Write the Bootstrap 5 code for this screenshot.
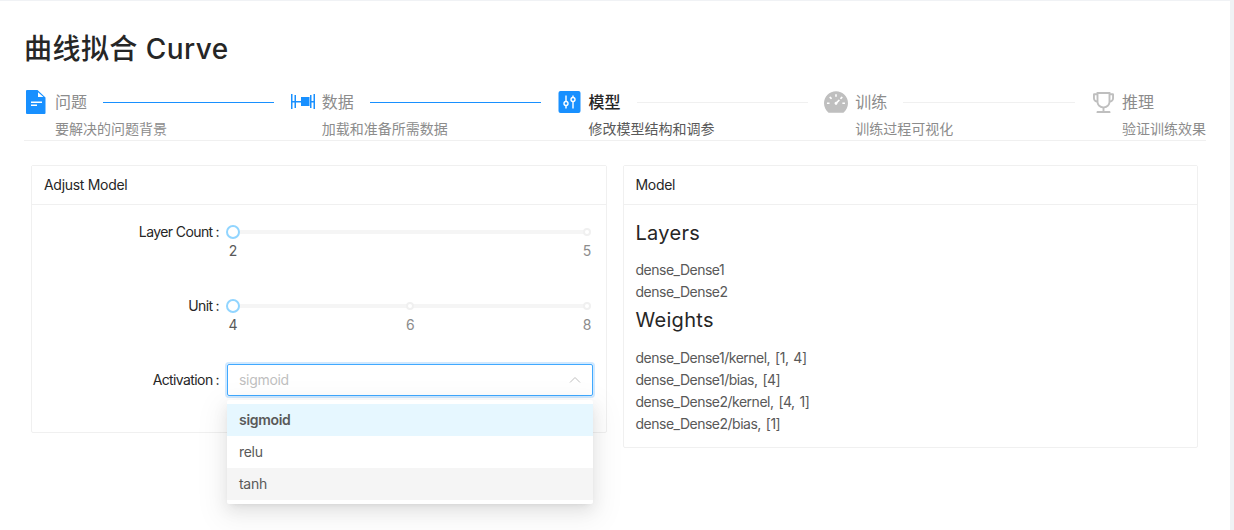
<!doctype html>
<html lang="zh-CN">
<head>
  <meta charset="utf-8">
  <meta name="viewport" content="width=device-width, initial-scale=1">
  <title>曲线拟合 Curve</title>
  <link href="https://cdn.jsdelivr.net/npm/bootstrap@5.3.3/dist/css/bootstrap.min.css" rel="stylesheet">
  <style>
    html, body {
      height: 100%;
    }

    body {
      background: #f0f2f5;
      font-family: Inter, "Noto Sans CJK SC", sans-serif;
      font-size: 14px;
      line-height: 22px;
      color: #595959;
      overflow: hidden;
    }

    .page-wrap {
      margin: 1px 4px 0 0;
      height: calc(100% - 1px);
      background: #fff;
      padding: 0 24px;
    }

    .page-title {
      font-size: 28px;
      line-height: 40px;
      font-weight: 500;
      letter-spacing: .45px;
      color: #262626;
      margin: 0;
      padding: 28px 0 21px;
    }

    /* steps */
    .step-bar {
      display: flex;
      border-bottom: 1px solid #f0f0f0;
      height: 51px;
    }

    .step-item {
      flex: 1 1 0;
      display: flex;
      padding-right: 16.5px;
      min-width: 0;
    }

    .step-item.last-step {
      flex: none;
      padding-right: 0;
    }

    .step-icon {
      flex: none;
      width: 31px;
      height: 24px;
    }

    .step-icon svg {
      display: block;
    }

    .step-icon .trophy-icon {
      margin: 2px 0 0 2px;
    }

    .step-body {
      flex: 1;
      min-width: 0;
    }

    .step-head {
      display: flex;
      align-items: center;
      font-size: 16px;
      line-height: 24px;
      color: #8c8c8c;
    }

    .step-line {
      flex: 1;
      height: 1px;
      background: #f0f0f0;
      margin-left: 16px;
    }

    .step-desc {
      color: #8c8c8c;
      white-space: nowrap;
      margin-top: 4px;
    }

    .is-done .step-line {
      background: #1890ff;
    }

    .is-active .step-head {
      color: #262626;
      font-weight: 500;
    }

    .is-active .step-desc {
      color: #595959;
    }

    /* cards */
    .panel-row {
      margin: 24px 0 0;
      display: grid;
      grid-template-columns: 1fr 1fr;
      gap: 16px;
      padding: 0 8px 0 7px;
      align-items: start;
      letter-spacing: -.3px;
    }

    .panel-row .card {
      border: 1px solid #f0f0f0;
      border-radius: 2px;
      color: #595959;
    }

    .panel-row .card-header {
      background: #fff;
      border-bottom: 1px solid #f0f0f0;
      border-radius: 0;
      color: #262626;
      height: 39px;
      padding: 8px 12px;
    }

    .adjust-body {
      padding: 20px 13px 36px 12px;
    }

    .form-line {
      display: flex;
    }

    .form-line + .form-line {
      margin-top: 37px;
    }

    .form-line.select-line {
      margin-top: 28px;
    }

    .form-name {
      flex: none;
      width: 183px;
      padding-right: 8px;
      text-align: right;
      color: #262626;
      white-space: nowrap;
      line-height: 14px;
      letter-spacing: -.6px;
    }

    .select-line .form-name {
      line-height: 32px;
    }

    .form-name i {
      font-style: normal;
      margin-left: 3px;
    }

    .form-field {
      flex: 1;
      position: relative;
      min-width: 0;
    }

    .slider-track {
      display: flex;
      justify-content: space-between;
      height: 14px;
      background: linear-gradient(#f5f5f5, #f5f5f5) center / calc(100% - 12px) 4px no-repeat;
    }

    .slider-marks {
      display: flex;
      justify-content: space-between;
      margin-top: 1px;
      color: #8c8c8c;
      letter-spacing: 0;
    }

    .slider-stop {
      width: 12px;
      display: flex;
      justify-content: center;
      align-items: center;
      white-space: nowrap;
    }

    .slider-marks .slider-stop + .slider-stop {
      padding-left: 1px;
    }

    .slider-marks .slider-stop:first-child {
      color: #595959;
    }

    .stop-dot {
      flex: none;
      display: block;
      width: 8px;
      height: 8px;
      background: #fff;
      border: 2px solid #f0f0f0;
      border-radius: 50%;
    }

    .stop-handle {
      flex: none;
      display: block;
      width: 14px;
      height: 14px;
      background: #fff;
      border: 2px solid #91d5ff;
      border-radius: 50%;
    }

    .select-box {
      display: flex;
      align-items: center;
      justify-content: space-between;
      height: 32px;
      padding: 0 11px;
      border: 1px solid #40a9ff;
      border-radius: 2px;
      box-shadow: 0 0 0 2px rgba(24, 144, 255, .2);
      color: #bfbfbf;
    }

    .select-list.dropdown-menu {
      top: 36px;
      left: 0;
      right: 0;
      min-width: 0;
      margin: 0;
      padding: 4px 0;
      border: 0;
      border-radius: 2px;
      font-size: 14px;
      box-shadow: 0 3px 6px -4px rgba(0, 0, 0, .12), 0 6px 16px 0 rgba(0, 0, 0, .08), 0 9px 28px 8px rgba(0, 0, 0, .05);
    }

    .select-list .dropdown-item {
      height: 32px;
      padding: 5px 12px;
      color: #595959;
    }

    .select-list .item-picked {
      background: #e6f7ff;
      font-weight: 600;
    }

    .select-list .item-hover {
      background: #f5f5f5;
    }

    .model-body {
      padding: 14px 12px 12px;
    }

    .model-body h5 {
      font-size: 20px;
      line-height: 28px;
      font-weight: 400;
      letter-spacing: .3px;
      color: #262626;
      margin: 0;
    }

    .model-list {
      margin: 12px 0 3px;
      letter-spacing: -.5px;
      word-spacing: 1.5px;
    }

    .model-list:last-child {
      margin: 13px 0 0;
    }
  </style>
</head>
<body>

<div class="page-wrap">
  <h1 class="page-title">曲线拟合 Curve</h1>

  <div class="step-bar">
    <div class="step-item is-done">
      <div class="step-icon">
        <svg width="22" height="24" viewBox="0 0 22 24"><path fill="#1890ff" fill-rule="evenodd" d="M3 0H13.5L21.5 7.5V23a1 1 0 0 1-1 1H3a1 1 0 0 1-1-1V1a1 1 0 0 1 1-1zM14 2.2V7H19.5zM7 11.5V13H18V11.5zM7 14.5V16H13V14.5z"/></svg>
      </div>
      <div class="step-body">
        <div class="step-head">问题<span class="step-line"></span></div>
        <div class="step-desc">要解决的问题背景</div>
      </div>
    </div>
    <div class="step-item is-done">
      <div class="step-icon">
        <svg width="24" height="24" viewBox="0 0 24 24" fill="#1890ff"><path d="M0 4h1.5v15H0zM22.5 4H24v15h-1.5zM3.5 5h1.5v13H3.5zM19 5h1.5v13H19zM1.5 11h2v1.5h-2zM20.5 11h2v1.5h-2zM5 11h5v1.5H5zM10 7h8.5v9H10z"/></svg>
      </div>
      <div class="step-body">
        <div class="step-head">数据<span class="step-line"></span></div>
        <div class="step-desc">加载和准备所需数据</div>
      </div>
    </div>
    <div class="step-item is-active">
      <div class="step-icon">
        <svg width="24" height="24" viewBox="0 0 24 24"><rect x=".5" y="1" width="22" height="22" rx="2" fill="#1890ff"/><path d="M8 5.5v13M15 5.5v13" stroke="#fff" stroke-width="1.4"/><circle cx="8" cy="13.5" r="2" fill="#1890ff" stroke="#fff" stroke-width="1.4"/><circle cx="15" cy="9.5" r="2" fill="#1890ff" stroke="#fff" stroke-width="1.4"/></svg>
      </div>
      <div class="step-body">
        <div class="step-head">模型<span class="step-line"></span></div>
        <div class="step-desc">修改模型结构和调参</div>
      </div>
    </div>
    <div class="step-item">
      <div class="step-icon">
        <svg width="24" height="24" viewBox="64 112 896 800"><path fill="#bfbfbf" d="M924.8 385.6a446.7 446.7 0 0 0-96-142.4 446.7 446.7 0 0 0-142.4-96C631.1 123.8 572.5 112 512 112s-119.1 11.8-174.4 35.2a446.7 446.7 0 0 0-142.4 96 446.7 446.7 0 0 0-96 142.4C75.8 440.9 64 499.5 64 560c0 132.7 58.3 257.7 159.9 343.1l1.7 1.4c5.8 4.8 13.1 7.5 20.6 7.5h531.7c7.5 0 14.8-2.7 20.6-7.5l1.7-1.4C901.7 817.7 960 692.7 960 560c0-60.5-11.8-119.1-35.2-174.4zM482 232c0-4.4 3.6-8 8-8h44c4.4 0 8 3.6 8 8v80c0 4.4-3.6 8-8 8h-44c-4.4 0-8-3.6-8-8v-80zM270 582c0 4.4-3.6 8-8 8h-80c-4.4 0-8-3.6-8-8v-44c0-4.4 3.6-8 8-8h80c4.4 0 8 3.6 8 8v44zm90.7-204.5l-31.1 31.1a8.03 8.03 0 0 1-11.3 0L261.7 352a8.03 8.03 0 0 1 0-11.3l31.1-31.1c3.1-3.1 8.2-3.1 11.3 0l56.6 56.6c3.1 3.1 3.1 8.2 0 11.3zm291.1 83.6l-84.5 84.5c5 18.7.2 39.4-14.5 54.1a55.95 55.95 0 0 1-79.2 0 55.95 55.95 0 0 1 0-79.2 55.87 55.87 0 0 1 54.1-14.5l84.5-84.5c3.1-3.1 8.2-3.1 11.3 0l28.3 28.3c3.1 3.1 3.1 8.1 0 11.3zm43-52.4l-31.1-31.1a8.03 8.03 0 0 1 0-11.3l56.6-56.6c3.1-3.1 8.2-3.1 11.3 0l31.1 31.1c3.1 3.1 3.1 8.2 0 11.3l-56.6 56.6a8.03 8.03 0 0 1-11.3 0zM846 582c0 4.4-3.6 8-8 8h-80c-4.4 0-8-3.6-8-8v-44c0-4.4 3.6-8 8-8h80c4.4 0 8 3.6 8 8v44z"/></svg>
      </div>
      <div class="step-body">
        <div class="step-head">训练<span class="step-line"></span></div>
        <div class="step-desc">训练过程可视化</div>
      </div>
    </div>
    <div class="step-item last-step">
      <div class="step-icon">
        <svg class="trophy-icon" width="21" height="21" viewBox="112 112 800 800"><path fill="#bfbfbf" d="M868 160h-92v-40c0-4.4-3.6-8-8-8H256c-4.4 0-8 3.6-8 8v40h-92a44 44 0 0 0-44 44v148c0 81.7 60 149.6 138.2 162C265.7 630.2 359 721.7 476 734.5v105.2H280c-17.7 0-32 14.3-32 32V904c0 4.4 3.6 8 8 8h512c4.4 0 8-3.6 8-8v-32.3c0-17.7-14.3-32-32-32H548V734.5C665 721.7 758.3 630.2 773.8 514 852 501.6 912 433.7 912 352V204a44 44 0 0 0-44-44zM184 352V232h64v207.6a91.99 91.99 0 0 1-64-87.6zm520 128c0 49.1-19.1 95.4-53.9 130.1-34.8 34.8-81 53.9-130.1 53.9h-16c-49.1 0-95.3-19.1-130.1-53.9-34.8-34.8-53.9-81-53.9-130.1V184h384v296zm136-128c0 41-26.9 75.8-64 87.6V232h64v120z"/></svg>
      </div>
      <div class="step-body">
        <div class="step-head">推理</div>
        <div class="step-desc">验证训练效果</div>
      </div>
    </div>
  </div>

  <div class="panel-row">
    <div class="card">
      <div class="card-header">Adjust Model</div>
      <div class="card-body adjust-body">
        <div class="form-line">
          <label class="form-name">Layer Count<i>:</i></label>
          <div class="form-field">
            <div class="slider-track">
              <span class="slider-stop"><span class="stop-handle"></span></span>
              <span class="slider-stop"><span class="stop-dot"></span></span>
            </div>
            <div class="slider-marks">
              <span class="slider-stop">2</span>
              <span class="slider-stop">5</span>
            </div>
          </div>
        </div>
        <div class="form-line">
          <label class="form-name">Unit<i>:</i></label>
          <div class="form-field">
            <div class="slider-track">
              <span class="slider-stop"><span class="stop-handle"></span></span>
              <span class="slider-stop"><span class="stop-dot"></span></span>
              <span class="slider-stop"><span class="stop-dot"></span></span>
            </div>
            <div class="slider-marks">
              <span class="slider-stop">4</span>
              <span class="slider-stop">6</span>
              <span class="slider-stop">8</span>
            </div>
          </div>
        </div>
        <div class="form-line select-line">
          <label class="form-name">Activation<i>:</i></label>
          <div class="form-field">
            <div class="select-box">
              <span>sigmoid</span>
              <svg width="12" height="12" viewBox="0 0 12 12"><path d="M1 8.5L6 3.5L11 8.5" fill="none" stroke="#bfbfbf" stroke-width="1"/></svg>
            </div>
            <div class="dropdown-menu show select-list">
              <a class="dropdown-item item-picked">sigmoid</a>
              <a class="dropdown-item">relu</a>
              <a class="dropdown-item item-hover">tanh</a>
            </div>
          </div>
        </div>
      </div>
    </div>

    <div class="card">
      <div class="card-header">Model</div>
      <div class="card-body model-body">
        <h5>Layers</h5>
        <div class="model-list">
          <div>dense_Dense1</div>
          <div>dense_Dense2</div>
        </div>
        <h5>Weights</h5>
        <div class="model-list">
          <div>dense_Dense1/kernel, [1, 4]</div>
          <div>dense_Dense1/bias, [4]</div>
          <div>dense_Dense2/kernel, [4, 1]</div>
          <div>dense_Dense2/bias, [1]</div>
        </div>
      </div>
    </div>
  </div>
</div>

<script src="https://cdn.jsdelivr.net/npm/bootstrap@5.3.3/dist/js/bootstrap.bundle.min.js"></script>
</body>
</html>
